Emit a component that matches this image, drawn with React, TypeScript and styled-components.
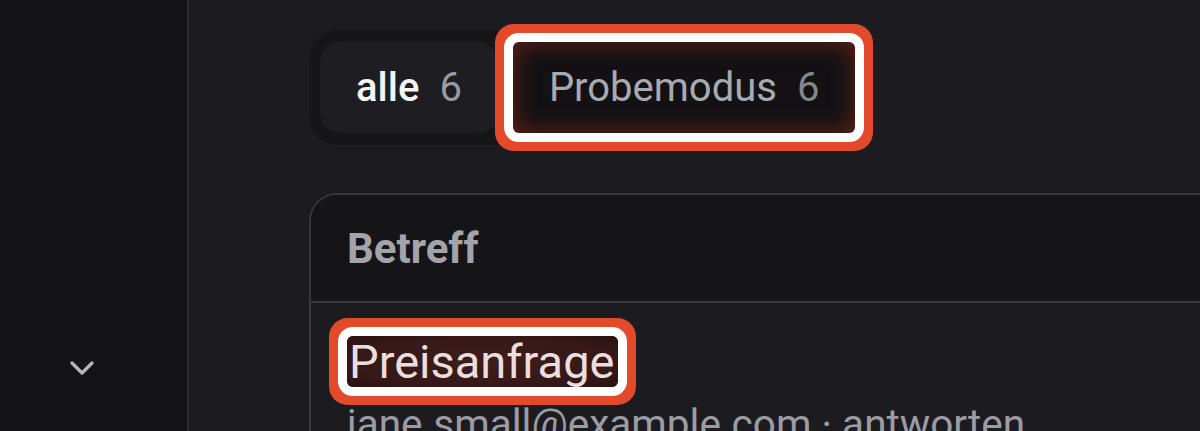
import React from "react";
import styled, { createGlobalStyle, css } from "styled-components";
import { ChevronDown } from "lucide-react";

const GlobalStyle = createGlobalStyle`
  html, body {
    margin: 0;
    padding: 0;
    background: #1c1c20;
    overflow: hidden;
  }
  body {
    font-family: Roboto, "Liberation Sans", Arial, sans-serif;
    -webkit-font-smoothing: antialiased;
  }
`;

const annotationRing = css`
  box-shadow: 0 0 0 9px #ffffff, 0 0 0 18px #e24a2b;
`;

const Shell = styled.div`
  display: flex;
  width: 1200px;
  height: 431px;
  overflow: hidden;
  background: #1c1c20;
`;

const Sidebar = styled.aside`
  flex: 0 0 189px;
  display: flex;
  flex-direction: column;
  align-items: flex-start;
  padding: 348px 0 0 62px;
  box-sizing: border-box;
  background: #141416;
  border-right: 2px solid #2c2c31;
  color: #b4b4b9;
`;

const Main = styled.main`
  flex: 1;
  min-width: 0;
  padding: 30px 0 0 120px;
  display: flex;
  flex-direction: column;
  align-items: flex-start;
`;

const TabGroup = styled.div`
  display: inline-flex;
  gap: 15px;
  padding: 12px 11px 12px 11px;
  background: #161619;
  border-radius: 30px;
`;

const Tab = styled.button<{ $active?: boolean; $annotated?: boolean }>`
  display: flex;
  align-items: center;
  gap: 20px;
  height: 91px;
  padding: 0 36px;
  border: none;
  font-family: inherit;
  font-size: 40px;
  border-radius: 20px;
  background: transparent;
  color: #a7aab1;
  font-weight: 400;
  cursor: pointer;
  ${(p) =>
    p.$active &&
    css`
      background: #1e1e22;
      color: #f4f4f5;
      font-weight: 500;
    `}
  ${(p) =>
    p.$annotated &&
    css`
      border-radius: 6px;
      background: #131114;
      box-shadow: inset 0 0 24px rgba(160, 48, 25, 0.6), 0 0 0 9px #ffffff,
        0 0 0 18px #e24a2b;
    `}
`;

const Count = styled.span<{ $active?: boolean }>`
  color: ${(p) => (p.$active ? "#9a9aa1" : "#86868d")};
  font-weight: 400;
`;

const Card = styled.section`
  margin-top: 48px;
  width: 1100px;
  border: 2px solid #36363b;
  border-right: none;
  border-bottom: none;
  border-radius: 28px 0 0 0;
`;

const CardHeader = styled.div`
  display: flex;
  align-items: center;
  height: 106px;
  padding: 0 36px;
  background: #151518;
  border-radius: 26px 0 0 0;
  border-bottom: 2px solid #38383d;
`;

const HeaderLabel = styled.span`
  font-size: 42px;
  font-weight: 700;
  color: #a3a3ab;
`;

const Row = styled.div`
  display: flex;
  flex-direction: column;
  align-items: flex-start;
  padding: 33px 36px 0;
`;

const Subject = styled.span`
  display: inline-block;
  font-size: 47px;
  line-height: 51px;
  padding: 0 3px 0 2px;
  color: #eadede;
  border-radius: 6px;
  background: radial-gradient(
    ellipse at center,
    #3e1d1c 0%,
    #351817 70%,
    #2a1211 100%
  );
  ${annotationRing};
`;

const Meta = styled.div`
  margin-top: 13px;
  font-size: 40.5px;
  line-height: 48px;
  color: #9c9ca4;
  white-space: nowrap;
`;

export default function App() {
  return (
    <>
      <GlobalStyle />
      <Shell>
        <Sidebar>
          <ChevronDown size={40} strokeWidth={2} />
        </Sidebar>
        <Main>
          <TabGroup>
            <Tab $active>
              alle <Count $active>6</Count>
            </Tab>
            <Tab $annotated>
              Probemodus <Count>6</Count>
            </Tab>
          </TabGroup>
          <Card>
            <CardHeader>
              <HeaderLabel>Betreff</HeaderLabel>
            </CardHeader>
            <Row>
              <Subject>Preisanfrage</Subject>
              <Meta>jane.small@example.com · antworten</Meta>
            </Row>
          </Card>
        </Main>
      </Shell>
    </>
  );
}
